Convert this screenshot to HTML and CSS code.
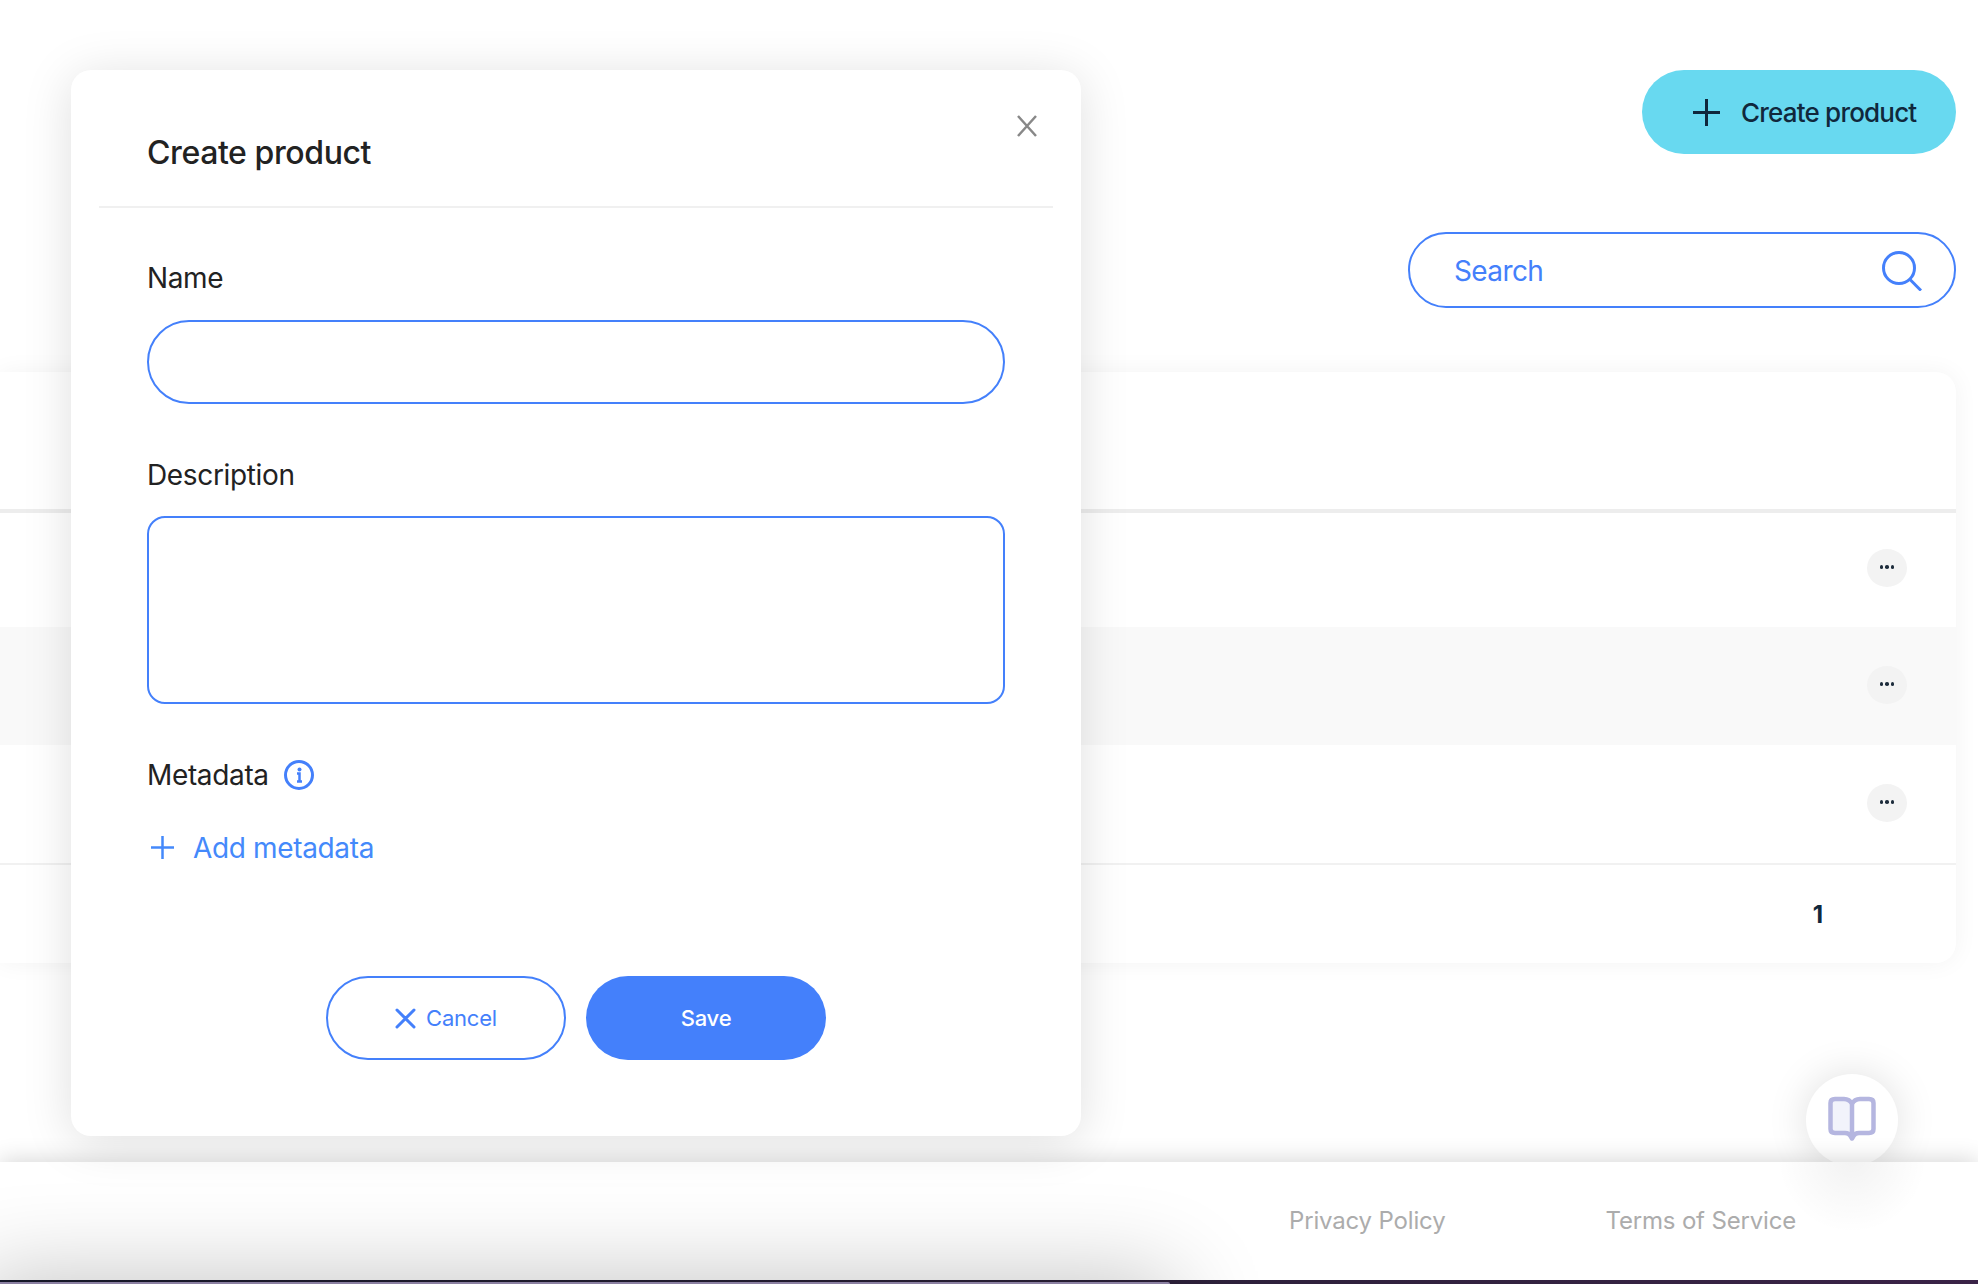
FILE: index.html
```html
<!DOCTYPE html>
<html lang="en">
<head>
<meta charset="utf-8">
<title>Create product</title>
<link rel="stylesheet" href="styles.css">
</head>
<body>
<div class="page">
  <main class="main">
    <div class="toolbar">
      <button class="create-btn" type="button">
        <svg class="create-plus" viewBox="0 0 27 27"><path d="M13.5 0v27M0 13.5h27"/></svg>
        <span>Create product</span>
      </button>
    </div>
    <div class="searchbar">
      <div class="search">
        <span>Search</span>
        <svg class="search-icon" viewBox="0 0 40 40"><circle cx="17" cy="17" r="15.5"/><path d="M28 28.500 39 39.500"/></svg>
      </div>
    </div>
    <section class="card">
      <div class="card-head"></div>
      <div class="row row-first"><button class="dots" type="button"><i></i><i></i><i></i></button></div>
      <div class="row row-alt"><button class="dots" type="button"><i></i><i></i><i></i></button></div>
      <div class="row row-last"><button class="dots" type="button"><i></i><i></i><i></i></button></div>
      <div class="pager"><span>1</span></div>
    </section>
    <button class="help" type="button" aria-label="Guide">
      <svg viewBox="0 0 48 46"><path class="book-page" d="M24 8C22 4 19 3 16 3H7C4 3 2.500 4.500 2.500 7V33C2.500 35.500 4 37 7 37H17C20 37 22 38 24 40Z"/><path class="book-line" d="M24 8C22 4 19 3 16 3H7C4 3 2.500 4.500 2.500 7V33C2.500 35.500 4 37 7 37H17C19.500 37 21.500 38 22.500 40L24 42.500 25.500 40C26.500 38 28.500 37 31 37H41C44 37 45.500 35.500 45.500 33V7C45.500 4.500 44 3 41 3H32C29 3 26 4 24 8V40"/></svg>
    </button>
  </main>
  <footer class="footer">
    <a class="foot-link">Privacy Policy</a>
    <a class="foot-link">Terms of Service</a>
  </footer>
  <div class="desk"><div class="dock"></div></div>

  <div class="modal" role="dialog">
    <header class="modal-head">
      <h2 class="modal-title">Create product</h2>
      <svg class="modal-close" viewBox="0 0 20 22"><path d="M1 1l18 20M19 1L1 21"/></svg>
    </header>
    <form class="modal-body">
      <label class="label label-name">Name</label>
      <input class="field field-line" type="text">
      <label class="label label-next label-desc">Description</label>
      <textarea class="field field-area"></textarea>
      <div class="label label-next label-meta">
        <span>Metadata</span>
        <svg class="info" viewBox="0 0 30 30"><circle cx="15" cy="15" r="13.500"/><circle class="info-dot" cx="15.500" cy="9.500" r="2"/><path d="M13 13.500h2.500V21M13 21.500h5"/></svg>
      </div>
      <a class="add-meta">
        <svg class="add-plus" viewBox="0 0 23 23"><path d="M11.500 0v23M0 11.500h23"/></svg>
        <span>Add metadata</span>
      </a>
      <div class="actions">
        <button class="btn btn-cancel" type="button">
          <svg class="cancel-x" viewBox="0 0 21 21"><path d="M2 2l17 17M19 2L2 19"/></svg>
          <span>Cancel</span>
        </button>
        <button class="btn btn-save" type="button">Save</button>
      </div>
    </form>
  </div>
</div>
</body>
</html>
```
FILE: styles.css
```css
* { box-sizing: border-box; }
html, body { margin: 0; height: 100%; overflow: hidden; background: #fff; }
body { font-family: Inter, "Liberation Sans", sans-serif; color: #222; }
svg { display: block; fill: none; }
button { font-family: inherit; cursor: pointer; }

.page { position: relative; height: 1284px; display: flex; flex-direction: column; overflow: hidden; }
.main { position: relative; flex: 1; padding: 70px 22px 0 0; }

.toolbar { display: flex; justify-content: flex-end; }
.create-btn {
  width: 314px; height: 84px; border: 0; border-radius: 42px; background: #68d9f0;
  color: #10283c; display: flex; align-items: center; gap: 21px; padding: 0 0 0 51px;
  font-size: 26px; font-weight: 500; letter-spacing: -0.8px;
}
.create-plus { width: 27px; height: 27px; stroke: #10283c; stroke-width: 3; }

.searchbar { display: flex; justify-content: flex-end; margin-top: 78px; }
.search {
  width: 548px; height: 76px; border: 2px solid #4480fb; border-radius: 38px;
  display: flex; align-items: center; justify-content: space-between;
  padding: 0 32px 0 44px; color: #4480fb; font-size: 28px; letter-spacing: -0.6px;
}
.search span { padding-top: 2px; }
.search-icon { width: 40px; height: 40px; stroke: #4480fb; stroke-width: 3; margin-top: 1px; }

.card {
  margin-top: 64px; background: #fff; border-radius: 0 20px 20px 0;
  box-shadow: 0 0 24px rgba(0, 0, 0, 0.05);
}
.card-head { height: 141px; border-bottom: 4px solid #ededed; }
.row { height: 118px; display: flex; align-items: center; justify-content: flex-end; padding-right: 49px; }
.row-first { height: 114px; padding-bottom: 4px; }
.row-alt { background: #f9f9f9; padding-bottom: 2px; }
.row-last { border-bottom: 2px solid #f1f1f1; height: 120px; padding-bottom: 2px; }
.dots {
  width: 40px; height: 38px; border: 0; border-radius: 50%; background: #f3f3f3; padding: 0 0 2px;
  display: flex; align-items: center; justify-content: center; gap: 2px;
}
.dots i { width: 3.500px; height: 3.500px; border-radius: 50%; background: #1d2c3c; }
.pager {
  height: 98px; display: flex; align-items: center; justify-content: flex-end;
  padding-right: 133px; font-size: 24px; font-weight: 700; color: #10283c;
}

.help {
  position: absolute; left: 1806px; top: 1074px; width: 92px; height: 92px;
  border: 0; border-radius: 50%; background: #fff; padding: 0;
  box-shadow: 0 0 40px rgba(0, 0, 0, 0.13);
  display: flex; align-items: flex-start; justify-content: center;
}
.help svg { width: 48px; height: 46px; margin-top: 22px; }
.book-page { fill: #f2f3fb; }
.book-line { stroke: #b5b6e0; stroke-width: 4.500; stroke-linejoin: round; fill: none; }

.footer {
  position: relative; z-index: 1; height: 118px;
  background: radial-gradient(circle 75px at 1852px -4px, rgba(0, 0, 0, 0.05), rgba(0, 0, 0, 0)) #fff;
  display: flex; align-items: center; padding: 0 0 0 1289px; gap: 160px;
  box-shadow: 0 -2px 22px rgba(0, 0, 0, 0.16);
  font-size: 24px; color: #acacac; letter-spacing: -0.17px;
}
.foot-link { display: block; padding-bottom: 2px; }

.desk { position: relative; z-index: 2; height: 4px; background: linear-gradient(90deg, #181a2c, #2a2038 50%, #3a2347); }
.dock {
  position: absolute; left: -20px; top: 2px; width: 1190px; height: 200px;
  background: #8b80a2; border-radius: 0 2px 0 0;
  box-shadow: 0 0 95px 4px rgba(0, 0, 0, 0.24);
}

.modal {
  position: absolute; z-index: 5; left: 71px; top: 70px; width: 1010px; height: 1066px;
  background: #fff; border-radius: 20px;
  box-shadow: 0 6px 50px rgba(0, 0, 0, 0.13);
}
.modal-head { position: relative; height: 138px; margin: 0 28px; border-bottom: 2px solid #f0f0f0; padding: 61px 0 0 48px; }
.modal-title { margin: 0; font-size: 32px; line-height: 44px; font-weight: 500; color: #222; letter-spacing: -0.4px; }
.modal-close { position: absolute; left: 918px; top: 45px; width: 20px; height: 22px; stroke: #888; stroke-width: 2.500; }

.modal-body { display: flex; flex-direction: column; padding: 0 76px; }
.label { display: block; font-size: 28px; line-height: 40px; font-weight: 400; color: #222; margin-bottom: 22px; letter-spacing: -0.35px; }
.label-name { margin-top: 50px; }
.label-next { margin-top: 51px; }
.label-desc { margin-bottom: 21px; }
.field { display: block; width: 100%; border: 2px solid #4480fb; background: #fff; outline: 0; margin: 0; }
.field-line { height: 84px; border-radius: 42px; }
.field-area { height: 188px; border-radius: 18px; resize: none; }
.label-meta { display: flex; align-items: center; gap: 15px; margin-bottom: 0; }
.info { width: 30px; height: 30px; stroke: #4480fb; stroke-width: 3; }
.info path { stroke-width: 2.500; }
.info-dot { fill: #4480fb; stroke: none; }
.add-meta { display: flex; align-items: center; gap: 19px; margin-top: 33px; padding-left: 4px; height: 40px; color: #4489fb; font-size: 28px; letter-spacing: -0.35px; }
.add-plus { width: 23px; height: 23px; stroke: #4489fb; stroke-width: 2.500; margin-top: -2px; }
.actions { display: flex; justify-content: center; gap: 20px; margin-top: 108px; }
.btn { width: 240px; height: 84px; border-radius: 42px; font-size: 22px; letter-spacing: -0.2px; display: flex; align-items: center; justify-content: center; padding: 0; }
.btn-cancel { border: 2px solid #4480fb; background: #fff; color: #4480fb; gap: 10px; }
.cancel-x { width: 21px; height: 21px; stroke: #4480fb; stroke-width: 3; stroke-linecap: round; }
.btn-save { border: 0; background: #4480fb; color: #fff; font-weight: 500; }
```
